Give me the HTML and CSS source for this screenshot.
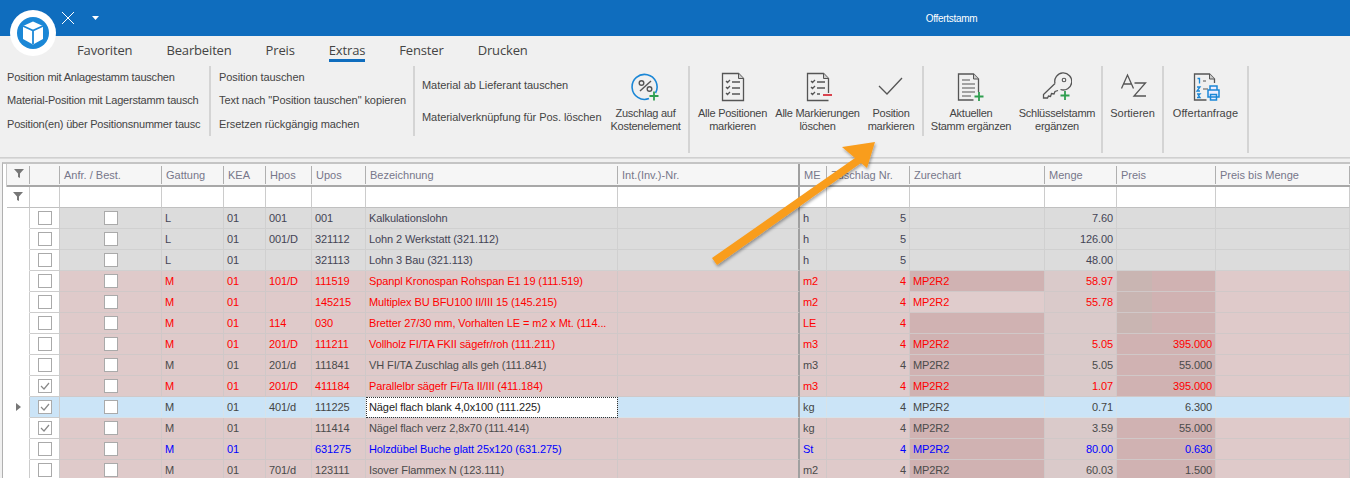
FILE: index.html
```html
<!DOCTYPE html>
<html lang="de">
<head>
<meta charset="utf-8">
<title>Offertstamm</title>
<link rel="stylesheet" href="styles.css">
</head>
<body>
<div class="page">
  <header class="titlebar">
    <svg class="qa-x" width="14" height="14" viewBox="0 0 14 14"><path d="M1 1l12 12M13 1L1 13" stroke="#fff" stroke-width="1" fill="none"/></svg>
    <svg class="qa-caret" width="7" height="4" viewBox="0 0 7 4"><path d="M0 0h7L3.500 4z" fill="#fff"/></svg>
    <div class="title">Offertstamm</div>
  </header>
  <svg class="logo" width="46" height="46" viewBox="0 0 46 46">
    <circle cx="23" cy="23" r="23" fill="#fff"/>
    <circle cx="23" cy="23" r="16" fill="#1b87d6"/>
    <path d="M23 11.500l10 4.500v13l-10 5.500-10-5.500V16z" fill="#fff"/>
    <path d="M13 16l10 4.500L33 16M23 20.500V34" stroke="#1b87d6" stroke-width="1.800" fill="none"/>
  </svg>
  <nav class="tabs">
    <span class="tab">Favoriten</span><span class="tab">Bearbeiten</span><span class="tab">Preis</span><span class="tab active">Extras</span><span class="tab">Fenster</span><span class="tab">Drucken</span>
  </nav>
  <section class="ribbon">
    <div class="group list g1">
      <span>Position mit Anlagestamm tauschen</span>
      <span>Material-Position mit Lagerstamm tausch</span>
      <span>Position(en) über Positionsnummer tausc</span>
    </div>
    <div class="group list g2">
      <span>Position tauschen</span>
      <span>Text nach "Position tauschen" kopieren</span>
      <span>Ersetzen rückgängig machen</span>
    </div>
    <div class="group g3">
      <div class="list2">
        <span>Material ab Lieferant tauschen</span>
        <span>Materialverknüpfung für Pos. löschen</span>
      </div>
      <div class="btn b-zuschlag">
        <svg class="ico" width="30" height="30" viewBox="0 0 30 30">
          <path d="M24.500 21A12.500 12.500 0 1 0 18 26.600" fill="none" stroke="#1b87d6" stroke-width="1.600"/>
          <path d="M9 19L20 9" stroke="#555" stroke-width="1.400"/>
          <circle cx="10.500" cy="11" r="2.300" fill="none" stroke="#555" stroke-width="1.400"/>
          <circle cx="18.500" cy="17" r="2.300" fill="none" stroke="#555" stroke-width="1.400"/>
          <path d="M23 19.500v9M18.500 24h9" stroke="#2f9e4f" stroke-width="1.800"/>
        </svg>
        <span>Zuschlag auf<br>Kostenelement</span>
      </div>
    </div>
    <div class="group g4">
      <div class="btn b-alle">
        <svg class="ico" width="30" height="30" viewBox="0 0 30 30">
          <path d="M4.500 1.500h16l5 5v22h-21z" fill="none" stroke="#555" stroke-width="1.300"/><path d="M20.500 1.500v5h5" fill="#ccc" stroke="#555" stroke-width="1"/>
          <path d="M8 9l1.500 1.500L12 8M8 15l1.500 1.500L12 14M8 21l1.500 1.500L12 20M14 10h8M14 16h8M14 22h8" fill="none" stroke="#555" stroke-width="1.300"/>
        </svg>
        <span>Alle Positionen<br>markieren</span>
      </div>
      <div class="btn b-mark">
        <svg class="ico" width="30" height="30" viewBox="0 0 30 30">
          <path d="M25.500 21V6.500l-5-5h-16v27h21" fill="none" stroke="#555" stroke-width="1.300"/><path d="M20.500 1.500v5h5" fill="#ccc" stroke="#555" stroke-width="1"/>
          <path d="M8 9l1.500 1.500L12 8M8 15l1.500 1.500L12 14M8 21l1.500 1.500L12 20M14 10h8M14 16h8M14 22h3" fill="none" stroke="#555" stroke-width="1.300"/>
          <path d="M20 23h9" stroke="#d9434e" stroke-width="2"/>
        </svg>
        <span>Alle Markierungen<br>löschen</span>
      </div>
      <div class="btn b-pos">
        <svg class="ico" width="30" height="30" viewBox="0 0 30 30"><path d="M3 14l8 8L26 6" fill="none" stroke="#555" stroke-width="1.300"/></svg>
        <span>Position<br>markieren</span>
      </div>
    </div>
    <div class="group g5">
      <div class="btn b-akt">
        <svg class="ico" width="30" height="30" viewBox="0 0 30 30">
          <path d="M22.500 20V7l-5-5H2.500v26h15" fill="none" stroke="#555" stroke-width="1.300"/><path d="M17.500 2v5h5" fill="#ccc" stroke="#555" stroke-width="1"/>
          <path d="M6 8h8M6 12h13M6 16h13M6 20h13M6 24h9" stroke="#555" stroke-width="1.200"/>
          <path d="M23 20v9M18.500 24.500h9" stroke="#2f9e4f" stroke-width="1.800"/>
        </svg>
        <span>Aktuellen<br>Stamm ergänzen</span>
      </div>
      <div class="btn b-key">
        <svg class="ico" width="30" height="30" viewBox="0 0 30 30">
          <path d="M13 11.500L1.500 22.500v3.500h4l1-2 2 .5 1-3 2.500.5 1-2.500 3-1M13 11.500A8.500 8.500 0 1 1 18.500 17.500" fill="none" stroke="#555" stroke-width="1.300"/>
          <circle cx="22" cy="8" r="1.800" fill="none" stroke="#555" stroke-width="1.100"/>
          <path d="M23 19v9M18.500 23.500h9" stroke="#2f9e4f" stroke-width="1.800"/>
        </svg>
        <span>Schlüsselstamm<br>ergänzen</span>
      </div>
    </div>
    <div class="group g6">
      <div class="btn b-sort">
        <svg class="ico" width="30" height="30" viewBox="0 0 30 30">
          <path d="M3.500 16.500L9.500 3l6 13.500M5.500 12h8M16.500 11h11L16 24h12" fill="none" stroke="#555" stroke-width="1.300"/>
        </svg>
        <span>Sortieren</span>
      </div>
    </div>
    <div class="group g7">
      <div class="btn b-off">
        <svg class="ico" width="30" height="30" viewBox="0 0 30 30">
          <path d="M23.500 11V7l-5-5h-15v26h12" fill="none" stroke="#555" stroke-width="1.300"/><path d="M18.500 2v5h5" fill="#ccc" stroke="#555" stroke-width="1"/>
          <path d="M6.500 6.500h2v5M6 15h3l-3 4h3M6 22h3l-1.500 1.500L9 25.500H6" fill="none" stroke="#1b87d6" stroke-width="1.300"/>
          <path d="M12 9h3M12 17h5" stroke="#555" stroke-width="1.200"/>
          <path d="M19 14h7v4h-7zM17 18h11v7h-11zM19.500 22.500h6v5.500h-6z" fill="#eef" stroke="#1b87d6" stroke-width="1.500"/>
        </svg>
        <span>Offertanfrage</span>
      </div>
    </div>
  </section>
  <div class="rule"></div>

  <section class="gridwrap">
    <div class="grid">
      <div class="row head">
        <div class="c"><svg class="funnel" width="10" height="9" viewBox="0 0 10 9"><path d="M0 0h10L6 4.500V9L4 8V4.500z"/></svg></div><div class="c"></div><div class="c">Anfr. / Best.</div><div class="c">Gattung</div><div class="c">KEA</div><div class="c">Hpos</div><div class="c">Upos</div><div class="c">Bezeichnung</div><div class="c thick">Int.(Inv.)-Nr.</div><div class="c">ME</div><div class="c">Zuschlag Nr.</div><div class="c">Zurechart</div><div class="c">Menge</div><div class="c">Preis</div><div class="c">Preis bis Menge</div>
      </div>
      <div class="row filter">
        <div class="c"><svg class="funnel" width="10" height="9" viewBox="0 0 10 9"><path d="M0 0h10L6 4.500V9L4 8V4.500z"/></svg></div><div class="c"></div><div class="c"></div><div class="c"></div><div class="c"></div><div class="c"></div><div class="c"></div><div class="c"></div><div class="c thick"></div><div class="c"></div><div class="c"></div><div class="c"></div><div class="c"></div><div class="c"></div><div class="c"></div>
      </div>

      <div class="row grey">
        <div class="c ind"></div><div class="c chk"><i class="box"></i></div><div class="c mid"><i class="box"></i></div><div class="c">L</div><div class="c">01</div><div class="c">001</div><div class="c">001</div><div class="c">Kalkulationslohn</div><div class="c thick"></div><div class="c">h</div><div class="c r">5</div><div class="c"></div><div class="c r">7.60</div><div class="c r"></div><div class="c"></div>
      </div>
      <div class="row grey">
        <div class="c ind"></div><div class="c chk"><i class="box"></i></div><div class="c mid"><i class="box"></i></div><div class="c">L</div><div class="c">01</div><div class="c">001/D</div><div class="c">321112</div><div class="c">Lohn 2 Werkstatt (321.112)</div><div class="c thick"></div><div class="c">h</div><div class="c r">5</div><div class="c"></div><div class="c r">126.00</div><div class="c r"></div><div class="c"></div>
      </div>
      <div class="row grey">
        <div class="c ind"></div><div class="c chk"><i class="box"></i></div><div class="c mid"><i class="box"></i></div><div class="c">L</div><div class="c">01</div><div class="c"></div><div class="c">321113</div><div class="c">Lohn 3 Bau (321.113)</div><div class="c thick"></div><div class="c">h</div><div class="c r">5</div><div class="c"></div><div class="c r">48.00</div><div class="c r"></div><div class="c"></div>
      </div>
      <div class="row pink red">
        <div class="c ind"></div><div class="c chk"><i class="box"></i></div><div class="c mid"><i class="box"></i></div><div class="c">M</div><div class="c">01</div><div class="c">101/D</div><div class="c">111519</div><div class="c">Spanpl Kronospan Rohspan E1 19 (111.519)</div><div class="c thick"></div><div class="c">m2</div><div class="c r">4</div><div class="c dk">MP2R2</div><div class="c r">58.97</div><div class="c r dk"></div><div class="c"></div>
      </div>
      <div class="row pink red">
        <div class="c ind"></div><div class="c chk"><i class="box"></i></div><div class="c mid"><i class="box"></i></div><div class="c">M</div><div class="c">01</div><div class="c"></div><div class="c">145215</div><div class="c">Multiplex BU BFU100 II/III 15 (145.215)</div><div class="c thick"></div><div class="c">m2</div><div class="c r">4</div><div class="c lt">MP2R2</div><div class="c r">55.78</div><div class="c r dk"></div><div class="c"></div>
      </div>
      <div class="row pink red">
        <div class="c ind"></div><div class="c chk"><i class="box"></i></div><div class="c mid"><i class="box"></i></div><div class="c">M</div><div class="c">01</div><div class="c">114</div><div class="c">030</div><div class="c">Bretter 27/30 mm, Vorhalten LE = m2 x Mt. (114...</div><div class="c thick"></div><div class="c">LE</div><div class="c r">4</div><div class="c dk"></div><div class="c r"></div><div class="c r dk"></div><div class="c"></div>
      </div>
      <div class="row pink red">
        <div class="c ind"></div><div class="c chk"><i class="box"></i></div><div class="c mid"><i class="box"></i></div><div class="c">M</div><div class="c">01</div><div class="c">201/D</div><div class="c">111211</div><div class="c">Vollholz FI/TA FKII sägefr/roh (111.211)</div><div class="c thick"></div><div class="c">m3</div><div class="c r">4</div><div class="c dk">MP2R2</div><div class="c r">5.05</div><div class="c r dk">395.000</div><div class="c"></div>
      </div>
      <div class="row pink">
        <div class="c ind"></div><div class="c chk"><i class="box"></i></div><div class="c mid"><i class="box"></i></div><div class="c">M</div><div class="c">01</div><div class="c">201/d</div><div class="c">111841</div><div class="c">VH FI/TA Zuschlag alls geh (111.841)</div><div class="c thick"></div><div class="c">m3</div><div class="c r">4</div><div class="c dk">MP2R2</div><div class="c r">5.05</div><div class="c r dk">55.000</div><div class="c"></div>
      </div>
      <div class="row pink red">
        <div class="c ind"></div><div class="c chk"><i class="box"><svg width="10" height="10" viewBox="0 0 10 10"><path d="M1 5l3 3 5-6" fill="none" stroke="#888" stroke-width="1.200"/></svg></i></div><div class="c mid"><i class="box"></i></div><div class="c">M</div><div class="c">01</div><div class="c">201/D</div><div class="c">411184</div><div class="c">Parallelbr sägefr Fi/Ta II/III (411.184)</div><div class="c thick"></div><div class="c">m3</div><div class="c r">4</div><div class="c dk">MP2R2</div><div class="c r">1.07</div><div class="c r dk">395.000</div><div class="c"></div>
      </div>
      <div class="row sel">
        <div class="c ind"><svg width="5" height="8" viewBox="0 0 5 8"><path d="M0 0l5 4-5 4z" fill="#777"/></svg></div><div class="c chk"><i class="box"><svg width="10" height="10" viewBox="0 0 10 10"><path d="M1 5l3 3 5-6" fill="none" stroke="#888" stroke-width="1.200"/></svg></i></div><div class="c mid"><i class="box"></i></div><div class="c">M</div><div class="c">01</div><div class="c">401/d</div><div class="c">111225</div><div class="c focus">Nägel flach blank 4,0x100 (111.225)</div><div class="c thick"></div><div class="c">kg</div><div class="c r">4</div><div class="c">MP2R2</div><div class="c r">0.71</div><div class="c r">6.300</div><div class="c"></div>
      </div>
      <div class="row pink">
        <div class="c ind"></div><div class="c chk"><i class="box"><svg width="10" height="10" viewBox="0 0 10 10"><path d="M1 5l3 3 5-6" fill="none" stroke="#888" stroke-width="1.200"/></svg></i></div><div class="c mid"><i class="box"></i></div><div class="c">M</div><div class="c">01</div><div class="c"></div><div class="c">111414</div><div class="c">Nägel flach verz 2,8x70 (111.414)</div><div class="c thick"></div><div class="c">kg</div><div class="c r">4</div><div class="c dk">MP2R2</div><div class="c r">3.59</div><div class="c r dk">55.000</div><div class="c"></div>
      </div>
      <div class="row pink blue">
        <div class="c ind"></div><div class="c chk"><i class="box"></i></div><div class="c mid"><i class="box"></i></div><div class="c">M</div><div class="c">01</div><div class="c"></div><div class="c">631275</div><div class="c">Holzdübel Buche glatt 25x120 (631.275)</div><div class="c thick"></div><div class="c">St</div><div class="c r">4</div><div class="c dk">MP2R2</div><div class="c r">80.00</div><div class="c r dk">0.630</div><div class="c"></div>
      </div>
      <div class="row pink">
        <div class="c ind"></div><div class="c chk"><i class="box"></i></div><div class="c mid"><i class="box"></i></div><div class="c">M</div><div class="c">01</div><div class="c">701/d</div><div class="c">123111</div><div class="c">Isover Flammex N (123.111)</div><div class="c thick"></div><div class="c">m2</div><div class="c r">4</div><div class="c dk">MP2R2</div><div class="c r">60.03</div><div class="c r dk">1.500</div><div class="c"></div>
      </div>
    </div>
  </section>

  <svg class="arrow" width="190" height="145" viewBox="700 135 190 145">
    <defs><filter id="sh" x="-10%" y="-10%" width="130%" height="130%"><feDropShadow dx="1" dy="2" stdDeviation="1.500" flood-color="#000" flood-opacity=".35"/></filter></defs>
    <polygon points="712,258 855,158 842,147 875,142 867,168 861,163 717,265" fill="#f99d1c" filter="url(#sh)"/>
  </svg>
</div>
</body>
</html>
```

FILE: styles.css
```css
* { box-sizing: border-box; }
html, body { margin: 0; padding: 0; }
body { font-family: "Liberation Sans", Arial, sans-serif; font-size: 11px; color: #444; background: #f0f0f0; }
.page { position: relative; width: 1350px; height: 478px; overflow: hidden; background: #f0f0f0; }

.titlebar { display: flex; align-items: center; height: 36px; background: #0f6dbe; color: #fff; padding-left: 61px; }
.qa-x { flex: none; }
.qa-caret { flex: none; margin-left: 17px; }
.title { position: absolute; left: 0; right: 0; padding-left: 553px; text-align: center; font-size: 10px; letter-spacing: -0.3px; }
.logo { position: absolute; left: 10px; top: 10px; }

.tabs { display: flex; gap: 34px; height: 26px; padding-left: 77px; align-items: flex-start; }
.tab { font-family: "Open Sans", sans-serif; font-size: 13px; letter-spacing: -0.15px; line-height: 28px; height: 26px; color: #444; }
.tab.active { border-bottom: 3px solid #0f6dbe; }

.ribbon { display: flex; height: 95px; padding-top: 4px; }
.group { flex: none; display: flex; height: 87px; border-right: 2px solid #d4d4d4; }
.group span { color: #444; }
.list { flex-direction: column; height: 70px; gap: 0; padding-left: 7px; }
.list span { display: block; height: 24px; line-height: 23px; white-space: nowrap; }
.g1 { width: 211px; letter-spacing: -0.2px; }
.g2 { width: 204px; padding-left: 8px; letter-spacing: -0.08px; }
.g3 { width: 275px; }
.list2 { display: flex; flex-direction: column; gap: 10px; padding: 8px 0 0 7px; width: 190px; letter-spacing: -0.06px; }
.list2 span { display: block; height: 22px; line-height: 22px; white-space: nowrap; }
.g4 { width: 234px; height: 70px; }
.g5 { width: 179px; }
.g6 { width: 61px; }
.g7 { width: 85px; }

.btn { display: flex; flex-direction: column; align-items: center; flex: none; text-align: center; white-space: nowrap; letter-spacing: -0.25px; }
.btn span { line-height: 13px; }
.ico { display: block; margin-top: 6px; margin-bottom: 5px; height: 30px; }
.b-zuschlag { width: 81px; }
.b-alle { width: 85px; }
.b-mark { width: 85px; }
.b-pos { width: 62px; }
.b-akt { width: 94px; }
.b-key { width: 78px; }
.b-sort { width: 59px; letter-spacing: 0; }
.b-off { width: 83px; letter-spacing: 0.05px; }

.rule { height: 2px; border-top: 1px solid #d0d0d0; border-bottom: 1px solid #dcdcdc; }

.gridwrap { padding: 3px 0 0 2px; }
.grid { border-left: 1px solid #b0b0b0; border-top: 2px solid #c4c4c4; padding-left: 4px; background: #fff; }

.row { display: grid; grid-template-columns: 23px 30px 102px 62px 42px 46px 54px 252px 182px 27px 83px 135px 72px 99px 1fr; height: 21px; line-height: 20px; letter-spacing: -0.1px; }
.c { border-right: 1px solid #ccc; border-bottom: 1px solid #cfcfcf; padding: 0 3px; white-space: nowrap; overflow: hidden; }
.c.r { text-align: right; }
.c.thick { border-right: 2px solid #a0a0a0; }

.head { height: 23px; line-height: 22px; background: #f6f6f6; color: #77778a; letter-spacing: 0; box-shadow: -1px 0 0 #c8c8c8; }
.head .c { border-right: none; border-bottom: 2px solid #a8a8a8; padding-left: 4px; background: linear-gradient(#b0b0b0, #b0b0b0) right 2px / 1px 18px no-repeat; }
.head .c.thick { border-right: 2px solid #a0a0a0; background: none; }
.filter { height: 21px; background: #fff; }
.filter .c { border-bottom: 1px solid #c0c0c0; }
.funnel { display: block; margin: 5px auto 0; fill: #777; }
.head .c:first-child, .filter .c:first-child { padding: 0; }

.row > .ind { background: #fff; border-bottom-color: #fff; padding: 0; display: flex; align-items: center; justify-content: center; }
.row > .chk { background: #fff; padding: 0; display: flex; align-items: center; justify-content: center; }
.row > .mid { padding: 0; display: flex; align-items: center; justify-content: center; }
.box { display: flex; align-items: center; justify-content: center; width: 14px; height: 14px; background: #fff; border: 1px solid #aaa; }

.grey .c { background-color: #dcdcdc; color: #444455; border-color: #d0d0d0; }
.pink .c { background-color: #dfcaca; border-color: #d0c8c8; color: #4a4a4a; }
.pink .c:nth-child(13) { background-color: #dacaca; }
.pink .c.thick { border-right-color: #a0a0a0; }
.grey .c.thick { border-right-color: #a0a0a0; }
.pink .c.dk { background-color: #d0b2b2; }
.pink .c.dk:empty:nth-child(14) { background: linear-gradient(90deg, #c9b5b2 36%, #d0b2b2 36%); }
.pink .c.lt { background-color: #e0cccc; }
.red .c { color: #ff0000; }
.blue .c { color: #0000ff; }
.sel .c { background-color: #cbe4f7; border-color: #d8e2e8; color: #444; }
.sel .c.thick { border-right-color: #a0a0a0; }
.row > .c.ind { background-color: #fff; border-color: #fff; border-right-color: #ccc; }
.row > .c.chk { background-color: #fff; border-color: #ccc; }
.row.sel > .c.chk { background-color: #cbe4f7; }
.sel .c.focus { background: #fff; color: #222; outline: 1px dotted #333; outline-offset: -1px; }

.arrow { position: absolute; left: 700px; top: 135px; }
```
